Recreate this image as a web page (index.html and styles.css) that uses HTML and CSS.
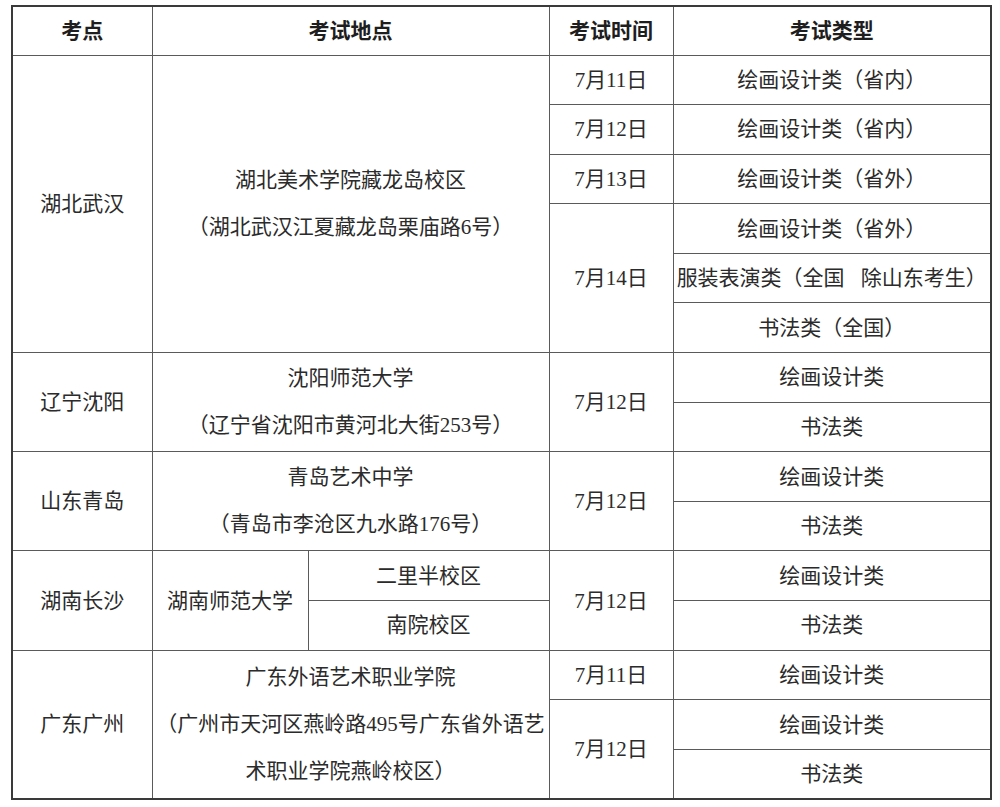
FILE: index.html
```html
<!DOCTYPE html>
<html lang="zh-CN">
<head>
<meta charset="utf-8">
<title>考点安排</title>
<link rel="stylesheet" href="styles.css">
</head>
<body>
<table class="exam">
  <colgroup>
    <col class="c-site">
    <col class="c-place-a">
    <col class="c-place-b">
    <col class="c-date">
    <col class="c-type">
  </colgroup>
  <thead>
    <tr class="head">
      <th>考点</th>
      <th colspan="2">考试地点</th>
      <th>考试时间</th>
      <th>考试类型</th>
    </tr>
  </thead>
  <tbody>
    <tr>
      <td rowspan="6">湖北武汉</td>
      <td rowspan="6" colspan="2" class="addr">湖北美术学院藏龙岛校区<br>（湖北武汉江夏藏龙岛栗庙路6号）</td>
      <td>7月11日</td>
      <td>绘画设计类（省内）</td>
    </tr>
    <tr><td>7月12日</td><td>绘画设计类（省内）</td></tr>
    <tr><td>7月13日</td><td>绘画设计类（省外）</td></tr>
    <tr><td rowspan="3">7月14日</td><td>绘画设计类（省外）</td></tr>
    <tr><td class="wide-gap">服装表演类（全国 除山东考生）</td></tr>
    <tr><td>书法类（全国）</td></tr>

    <tr>
      <td rowspan="2">辽宁沈阳</td>
      <td rowspan="2" colspan="2" class="addr">沈阳师范大学<br>（辽宁省沈阳市黄河北大街253号）</td>
      <td rowspan="2">7月12日</td>
      <td>绘画设计类</td>
    </tr>
    <tr><td>书法类</td></tr>

    <tr>
      <td rowspan="2">山东青岛</td>
      <td rowspan="2" colspan="2" class="addr">青岛艺术中学<br>（青岛市李沧区九水路176号）</td>
      <td rowspan="2">7月12日</td>
      <td>绘画设计类</td>
    </tr>
    <tr><td>书法类</td></tr>

    <tr>
      <td rowspan="2">湖南长沙</td>
      <td rowspan="2">湖南师范大学</td>
      <td>二里半校区</td>
      <td rowspan="2">7月12日</td>
      <td>绘画设计类</td>
    </tr>
    <tr><td>南院校区</td><td>书法类</td></tr>

    <tr>
      <td rowspan="3">广东广州</td>
      <td rowspan="3" colspan="2" class="addr">广东外语艺术职业学院<br>（广州市天河区燕岭路495号广东省外语艺<br>术职业学院燕岭校区）</td>
      <td>7月11日</td>
      <td>绘画设计类</td>
    </tr>
    <tr><td rowspan="2">7月12日</td><td>绘画设计类</td></tr>
    <tr><td>书法类</td></tr>
  </tbody>
</table>
</body>
</html>
```

FILE: styles.css
```css
html, body {
  margin: 0;
  padding: 0;
  background: #fff;
}

.exam {
  margin: 5px 0 0 11px;
  border-collapse: collapse;
  table-layout: fixed;
  width: 979px;
  border: 2px solid #3a3a3a;
  font-family: "Liberation Serif", "Noto Sans CJK SC", sans-serif;
  font-size: 21px;
  color: #2b2b2b;
}

.c-site { width: 140px; }
.c-place-a { width: 156px; }
.c-place-b { width: 241px; }
.c-date { width: 124px; }
.c-type { width: 318px; }

.exam th,
.exam td {
  border: 1px solid #5a5a5a;
  padding: 0;
  text-align: center;
  vertical-align: middle;
  white-space: nowrap;
  line-height: 26px;
}

.exam tr {
  height: 49.6px;
}

.exam .head {
  height: 49px;
}

.exam th {
  font-weight: 700;
  color: #1e1e1e;
}

.exam .addr {
  line-height: 47px;
}

.exam .wide-gap {
  word-spacing: 11px;
}
```
